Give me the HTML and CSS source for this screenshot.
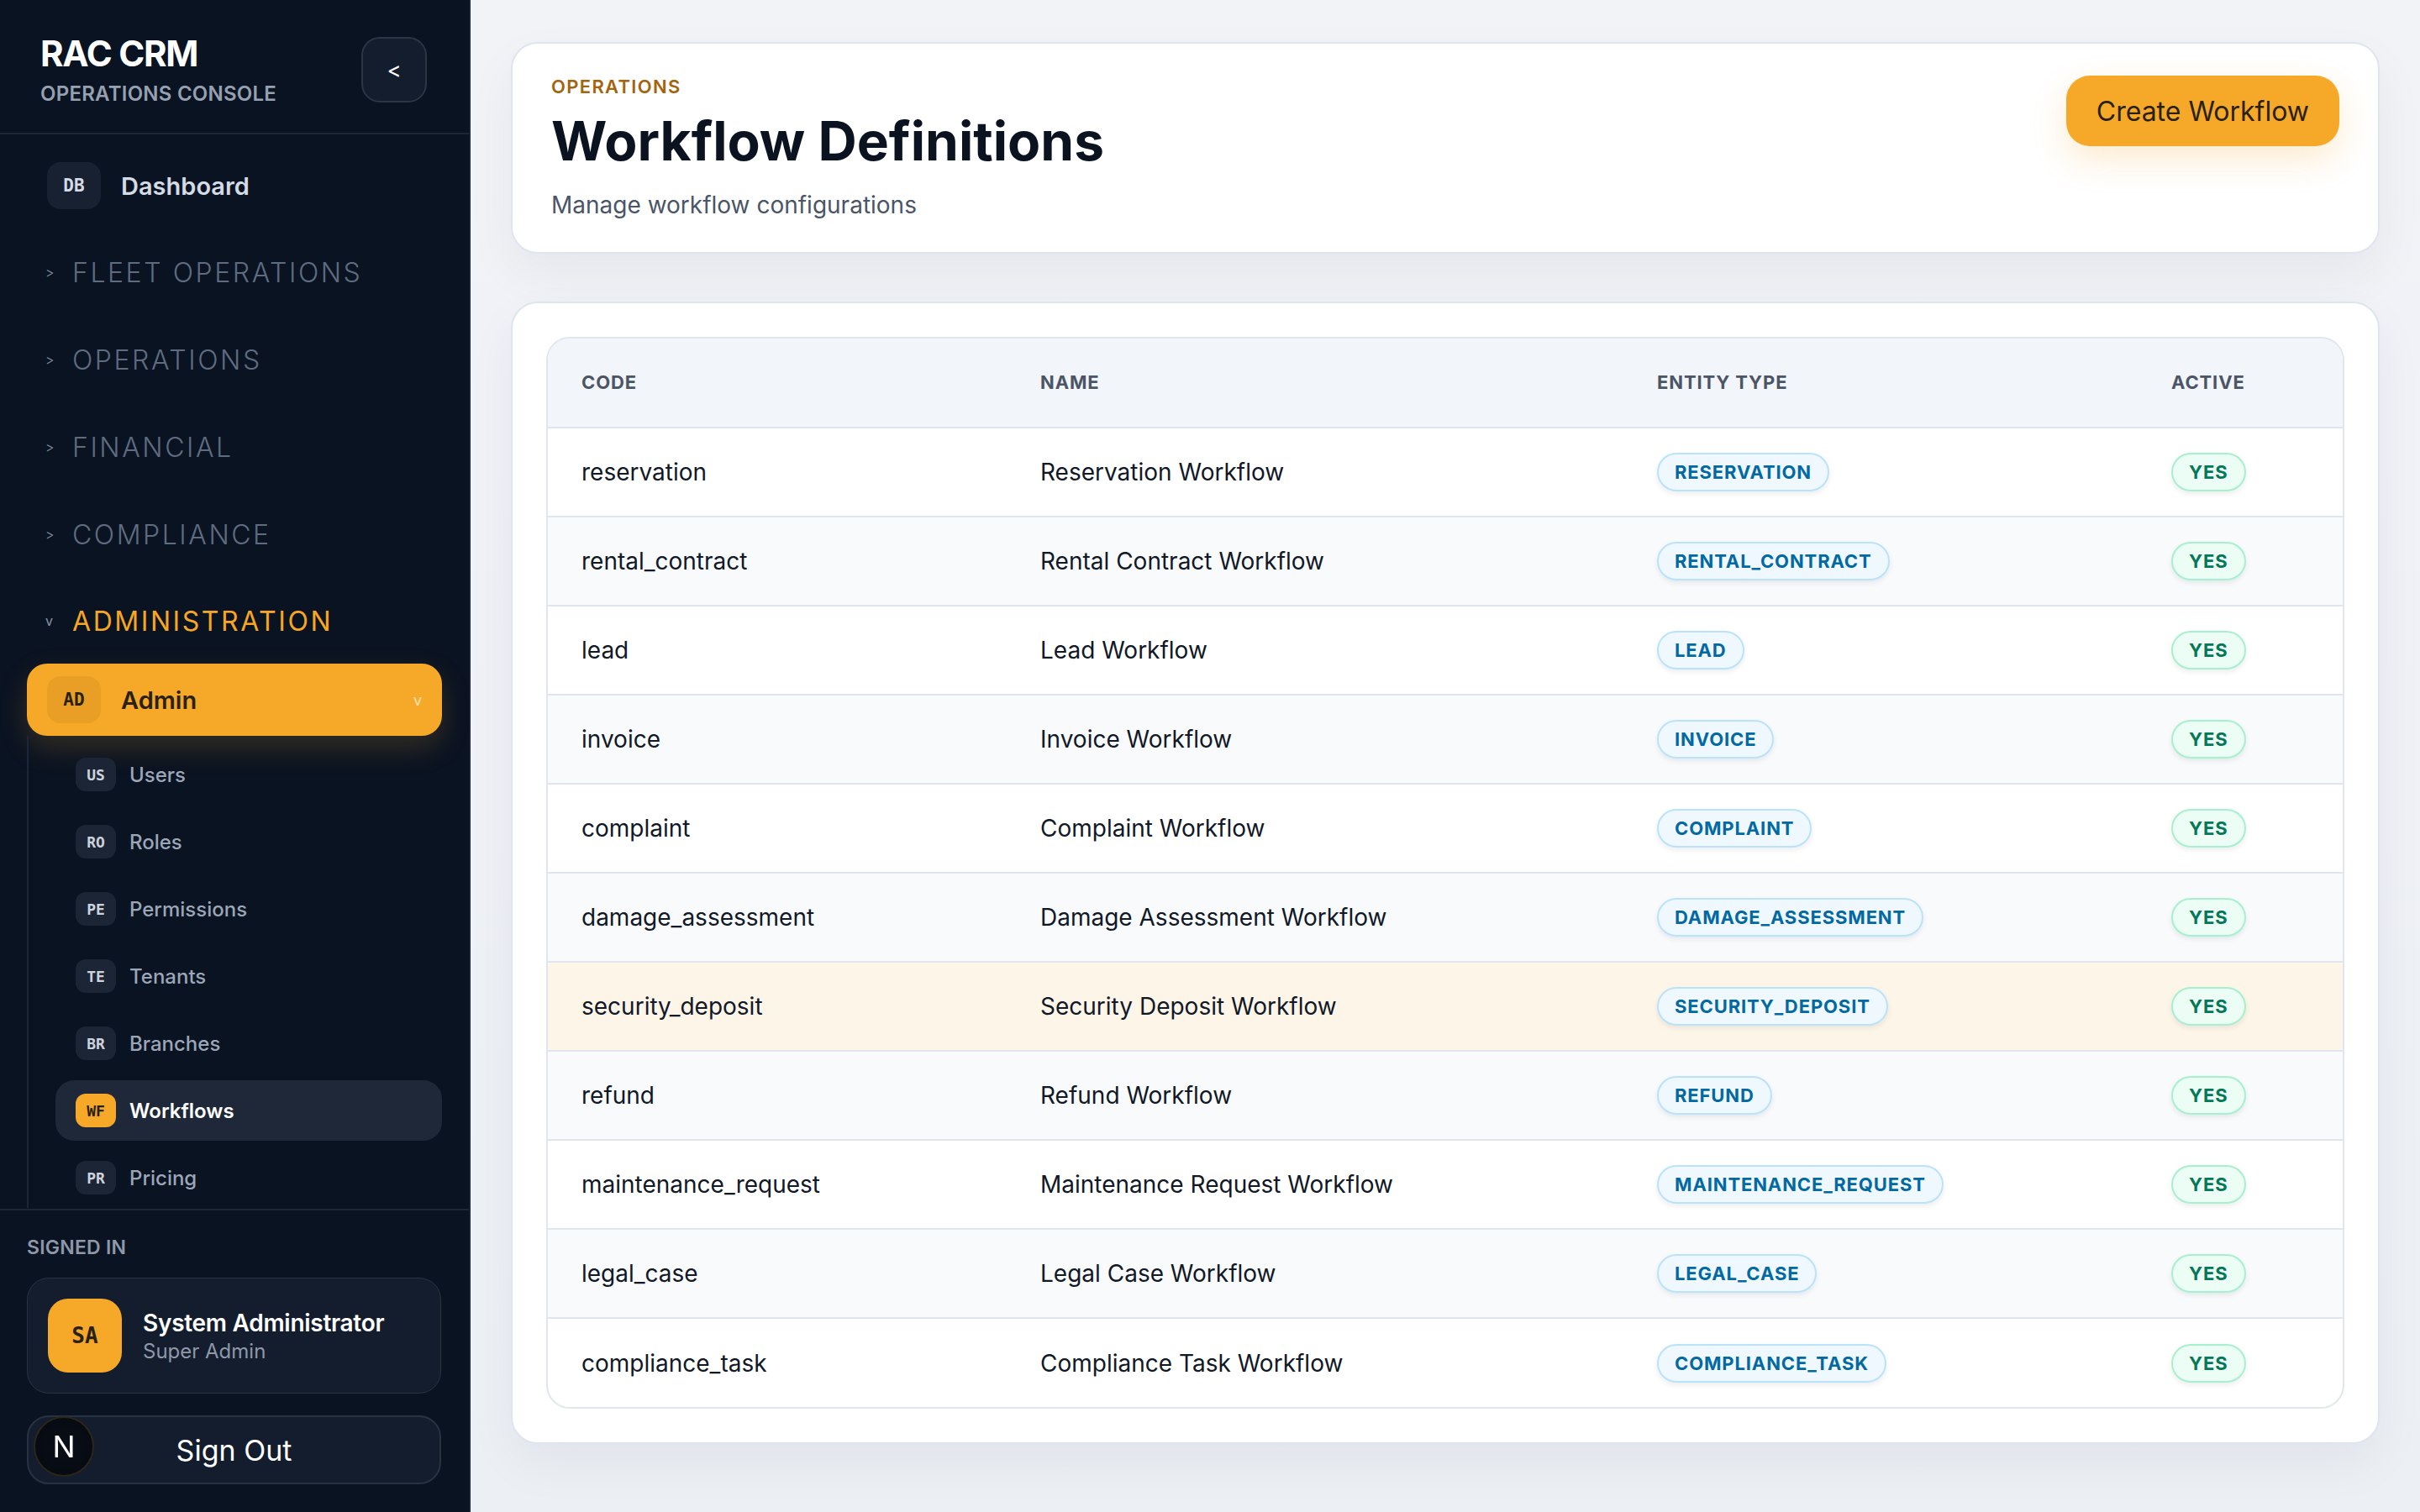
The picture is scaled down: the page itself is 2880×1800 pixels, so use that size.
FILE: index.html
```html
<!DOCTYPE html>
<html lang="en">
<head>
    <meta charset="UTF-8">
    <meta name="viewport" content="width=device-width, initial-scale=1.0">
    <title>Workflow Definitions - RAC CRM</title>
    <link rel="stylesheet" href="styles.css">
</head>
<body>
    <div class="app">
        <aside class="sidebar">
            <div class="brand">
                <div>
                    <div class="brand-name">RAC CRM</div>
                    <div class="brand-sub">OPERATIONS CONSOLE</div>
                </div>
                <button class="collapse-btn">&lt;</button>
            </div>

            <nav class="nav">
                <a class="nav-item">
                    <span class="nav-badge">DB</span>
                    <span class="nav-label">Dashboard</span>
                </a>

                <div class="nav-section"><span class="chev">&gt;</span>FLEET OPERATIONS</div>
                <div class="nav-section"><span class="chev">&gt;</span>OPERATIONS</div>
                <div class="nav-section"><span class="chev">&gt;</span>FINANCIAL</div>
                <div class="nav-section"><span class="chev">&gt;</span>COMPLIANCE</div>
                <div class="nav-section open"><span class="chev">v</span>ADMINISTRATION</div>

                <a class="nav-item active">
                    <span class="nav-badge">AD</span>
                    <span class="nav-label">Admin</span>
                    <span class="caret">v</span>
                </a>

                <div class="subnav">
                    <a class="sub-item"><span class="sub-badge">US</span>Users</a>
                    <a class="sub-item"><span class="sub-badge">RO</span>Roles</a>
                    <a class="sub-item"><span class="sub-badge">PE</span>Permissions</a>
                    <a class="sub-item"><span class="sub-badge">TE</span>Tenants</a>
                    <a class="sub-item"><span class="sub-badge">BR</span>Branches</a>
                    <a class="sub-item current"><span class="sub-badge">WF</span>Workflows</a>
                    <a class="sub-item"><span class="sub-badge">PR</span>Pricing</a>
                </div>
            </nav>

            <div class="sidebar-footer">
                <div class="signed-in">SIGNED IN</div>
                <div class="user-card">
                    <div class="avatar">SA</div>
                    <div>
                        <div class="user-name">System Administrator</div>
                        <div class="user-role">Super Admin</div>
                    </div>
                </div>
                <button class="signout-btn">Sign Out</button>
            </div>
        </aside>

        <main class="main">
            <section class="page-head card">
                <div>
                    <div class="eyebrow">OPERATIONS</div>
                    <h1>Workflow Definitions</h1>
                    <p class="subtitle">Manage workflow configurations</p>
                </div>
                <button class="primary-btn">Create Workflow</button>
            </section>

            <section class="card table-card">
                <div class="table-wrap">
                    <table>
                        <colgroup>
                            <col class="col-code">
                            <col class="col-name">
                            <col class="col-entity">
                            <col>
                        </colgroup>
                        <thead>
                            <tr>
                                <th>Code</th>
                                <th>Name</th>
                                <th>Entity Type</th>
                                <th>Active</th>
                            </tr>
                        </thead>
                        <tbody>
                            <tr>
                                <td>reservation</td>
                                <td>Reservation Workflow</td>
                                <td><span class="pill entity">RESERVATION</span></td>
                                <td><span class="pill yes">YES</span></td>
                            </tr>
                            <tr>
                                <td>rental_contract</td>
                                <td>Rental Contract Workflow</td>
                                <td><span class="pill entity">RENTAL_CONTRACT</span></td>
                                <td><span class="pill yes">YES</span></td>
                            </tr>
                            <tr>
                                <td>lead</td>
                                <td>Lead Workflow</td>
                                <td><span class="pill entity">LEAD</span></td>
                                <td><span class="pill yes">YES</span></td>
                            </tr>
                            <tr>
                                <td>invoice</td>
                                <td>Invoice Workflow</td>
                                <td><span class="pill entity">INVOICE</span></td>
                                <td><span class="pill yes">YES</span></td>
                            </tr>
                            <tr>
                                <td>complaint</td>
                                <td>Complaint Workflow</td>
                                <td><span class="pill entity">COMPLAINT</span></td>
                                <td><span class="pill yes">YES</span></td>
                            </tr>
                            <tr>
                                <td>damage_assessment</td>
                                <td>Damage Assessment Workflow</td>
                                <td><span class="pill entity">DAMAGE_ASSESSMENT</span></td>
                                <td><span class="pill yes">YES</span></td>
                            </tr>
                            <tr class="hovered">
                                <td>security_deposit</td>
                                <td>Security Deposit Workflow</td>
                                <td><span class="pill entity">SECURITY_DEPOSIT</span></td>
                                <td><span class="pill yes">YES</span></td>
                            </tr>
                            <tr>
                                <td>refund</td>
                                <td>Refund Workflow</td>
                                <td><span class="pill entity">REFUND</span></td>
                                <td><span class="pill yes">YES</span></td>
                            </tr>
                            <tr>
                                <td>maintenance_request</td>
                                <td>Maintenance Request Workflow</td>
                                <td><span class="pill entity">MAINTENANCE_REQUEST</span></td>
                                <td><span class="pill yes">YES</span></td>
                            </tr>
                            <tr>
                                <td>legal_case</td>
                                <td>Legal Case Workflow</td>
                                <td><span class="pill entity">LEGAL_CASE</span></td>
                                <td><span class="pill yes">YES</span></td>
                            </tr>
                            <tr>
                                <td>compliance_task</td>
                                <td>Compliance Task Workflow</td>
                                <td><span class="pill entity">COMPLIANCE_TASK</span></td>
                                <td><span class="pill yes">YES</span></td>
                            </tr>
                        </tbody>
                    </table>
                </div>
            </section>
        </main>
    </div>

    <!-- dev build indicator -->
    <div class="dev-indicator">N</div>
</body>
</html>
```

FILE: styles.css
```css
* {
    box-sizing: border-box;
}
body {
    margin: 0;
    font-family: Inter, "Noto Sans", sans-serif;
    background: #eef1f5;
    color: #0f172a;
}
button {
    font-family: inherit;
    cursor: pointer;
}
a {
    text-decoration: none;
    color: inherit;
}
.app {
    display: flex;
    height: 100vh;
}

/* sidebar */
.sidebar {
    width: 560px;
    flex-shrink: 0;
    background: #0a1322;
    border-right: 2px solid #1a2333;
    display: flex;
    flex-direction: column;
    color: #d3d9e2;
}
.brand {
    display: flex;
    justify-content: space-between;
    align-items: center;
    padding: 40px 50px 32px 48px;
    border-bottom: 2px solid #1c2637;
}
.brand-name {
    font-size: 42px;
    font-weight: 700;
    color: #fff;
    letter-spacing: -0.03em;
    line-height: 48px;
}
.brand-sub {
    font-size: 24px;
    font-weight: 600;
    color: #95a0b0;
    letter-spacing: 0.01em;
    margin-top: 9px;
}
.collapse-btn {
    width: 78px;
    height: 78px;
    border-radius: 22px;
    background: #141d2d;
    border: 2px solid #2b3546;
    color: #fff;
    font-size: 26px;
}
.nav {
    flex: 1;
    overflow: hidden;
    padding: 18px 32px 0;
}
.nav-item {
    display: flex;
    align-items: center;
    gap: 24px;
    padding: 15px 24px;
    border-radius: 24px;
    font-size: 29px;
    font-weight: 600;
    color: #d5dbe4;
}
.nav-badge {
    width: 64px;
    height: 56px;
    border-radius: 16px;
    background: #182131;
    display: flex;
    align-items: center;
    justify-content: center;
    font-family: "DejaVu Sans Mono", monospace;
    font-size: 21px;
    font-weight: 700;
    color: #d5dbe4;
}
.nav-section {
    display: flex;
    align-items: center;
    height: 104px;
    padding-left: 22px;
    font-size: 32px;
    font-weight: 300;
    letter-spacing: 0.08em;
    color: #5f6c80;
}
.nav-section:first-of-type {
    margin-top: 8px;
}
.nav-section.open {
    color: #f6a623;
    font-weight: 400;
    height: 102px;
}
.chev {
    width: 32px;
    font-size: 16px;
    color: #8a94a5;
    letter-spacing: 0;
}
.nav-item.active {
    background: #f6a928;
    color: #2a2116;
    box-shadow: 0 14px 34px rgba(245, 166, 35, 0.18);
}
.nav-item.active .nav-badge {
    background: #e99f26;
    color: #2a2116;
}
.caret {
    margin-left: auto;
    font-size: 18px;
    font-weight: 400;
    color: #fbe3b4;
}
.subnav {
    border-left: 2px solid #1c2637;
    padding: 10px 0 0 32px;
    display: flex;
    flex-direction: column;
    gap: 8px;
}
.sub-item {
    display: flex;
    align-items: center;
    gap: 16px;
    height: 72px;
    padding-left: 24px;
    border-radius: 22px;
    font-size: 24px;
    font-weight: 500;
    color: #9ba6b6;
}
.sub-badge {
    width: 48px;
    height: 40px;
    border-radius: 12px;
    background: #1c2535;
    display: flex;
    align-items: center;
    justify-content: center;
    font-family: "DejaVu Sans Mono", monospace;
    font-size: 18px;
    font-weight: 700;
    color: #cdd3dc;
}
.sub-item.current {
    background: #1e2839;
    color: #fff;
    font-weight: 600;
}
.sub-item.current .sub-badge {
    background: #f6a928;
    color: #2a2116;
}

.sidebar-footer {
    border-top: 2px solid #1c2637;
    padding: 30px 33px 33px 32px;
}
.signed-in {
    font-size: 23px;
    font-weight: 600;
    color: #8e98a8;
    letter-spacing: 0.01em;
}
.user-card {
    margin-top: 22px;
    display: flex;
    align-items: center;
    gap: 25px;
    padding: 24px;
    background: #141d2e;
    border: 1px solid #283242;
    border-radius: 26px;
}
.avatar {
    width: 88px;
    height: 88px;
    border-radius: 24px;
    background: #f6a928;
    display: flex;
    align-items: center;
    justify-content: center;
    font-family: "DejaVu Sans Mono", monospace;
    font-size: 26px;
    font-weight: 700;
    color: #2a2116;
}
.user-name {
    font-size: 28px;
    font-weight: 600;
    color: #fff;
    letter-spacing: -0.01em;
}
.user-role {
    font-size: 24px;
    color: #8e98a8;
    margin-top: 2px;
}
.signout-btn {
    margin-top: 26px;
    width: 100%;
    height: 82px;
    border-radius: 26px;
    background: #141d2e;
    border: 2px solid #283242;
    color: #fff;
    font-size: 34px;
}
.dev-indicator {
    position: fixed;
    left: 40px;
    bottom: 42px;
    width: 72px;
    height: 72px;
    border-radius: 50%;
    border: 2px solid #2c2619;
    display: flex;
    align-items: center;
    justify-content: center;
    font-size: 36px;
    font-weight: 400;
    color: #fff;
    background: radial-gradient(circle, #0a0f18 0%, #05080f 100%);
}

/* main */
.main {
    flex: 1;
    padding: 50px 48px 50px 48px;
    overflow: hidden;
    background: linear-gradient(180deg, #f1f3f7 0%, #eceff4 100%);
}
.card {
    background: #fff;
    border: 2px solid #dfe5ee;
    border-radius: 32px;
    box-shadow: 0 24px 60px rgba(15, 23, 42, 0.05);
}
.page-head {
    display: flex;
    justify-content: space-between;
    align-items: flex-start;
    padding: 38px 46px 36px 46px;
}
.eyebrow {
    font-size: 22px;
    font-weight: 600;
    color: #a3640c;
    letter-spacing: 0.06em;
    line-height: 26px;
}
h1 {
    margin: 14px 0 0;
    font-size: 64px;
    font-weight: 700;
    line-height: 76px;
    color: #0b1220;
}
.subtitle {
    margin: 18px 0 0;
    font-size: 28px;
    line-height: 40px;
    color: #4a5568;
}
.primary-btn {
    height: 84px;
    padding: 0 36px;
    border: none;
    border-radius: 28px;
    background: #f6a928;
    color: #2a2116;
    font-size: 32px;
    box-shadow: 0 16px 40px rgba(245, 166, 35, 0.22);
}
.table-card {
    margin-top: 57px;
    padding: 40px;
}
.table-wrap {
    border: 2px solid #dfe6ef;
    border-radius: 28px;
    overflow: hidden;
}
table {
    width: 100%;
    border-collapse: collapse;
    table-layout: fixed;
}
.col-code {
    width: 546px;
}
.col-name {
    width: 734px;
}
.col-entity {
    width: 612px;
}
th {
    text-align: left;
    background: #f2f5f9;
    padding: 38px 40px 39px;
    font-size: 22px;
    line-height: 28px;
    font-weight: 700;
    letter-spacing: 0.04em;
    text-transform: uppercase;
    color: #4b5565;
}
td {
    border-top: 2px solid #dfe6ef;
    height: 106px;
    padding: 0 40px;
    vertical-align: middle;
    font-size: 28px;
    line-height: 32px;
    color: #111827;
}
tbody tr:nth-child(even) {
    background: #f8fafc;
}
tbody tr.hovered {
    background: #fdf5e8;
}
.pill {
    display: inline-block;
    height: 46px;
    line-height: 42px;
    padding: 0 19px;
    border-radius: 999px;
    border: 2px solid;
    font-size: 22px;
    font-weight: 700;
    letter-spacing: 0.04em;
    box-shadow: 0 3px 6px rgba(15, 23, 42, 0.08);
    vertical-align: middle;
}
.pill.entity {
    background: #f0f8ff;
    border-color: #bae3fb;
    color: #0369a1;
}
.pill.yes {
    background: #ecfdf5;
    border-color: #a7f0cf;
    color: #047857;
}
```
